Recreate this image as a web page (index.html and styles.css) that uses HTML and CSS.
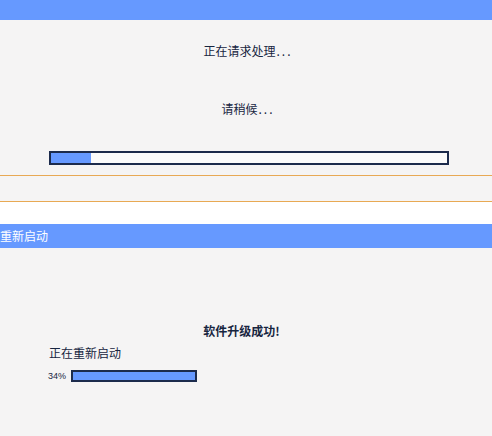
FILE: index.html
```html
<!DOCTYPE html>
<html lang="zh-CN">
<head>
<meta charset="utf-8">
<title>重新启动</title>
<link rel="stylesheet" href="styles.css">
</head>
<body>
  <div class="topbar"></div>
  <section class="request">
    <p class="msg msg-first">正在请求处理<span class="dots">...</span></p>
    <p class="msg msg-wait">请稍候<span class="dots">...</span></p>
    <div class="progress progress-wide">
      <div class="progress-fill" style="width: 10%"></div>
    </div>
  </section>
  <div class="divider"></div>
  <div class="gap"></div>
  <div class="titlebar">重新启动</div>
  <section class="reboot">
    <p class="msg msg-success">软件升级成功!</p>
    <p class="status">正在重新启动</p>
    <div class="percent-row">
      <span class="percent">34%</span>
      <div class="progress progress-small">
        <div class="progress-fill" style="width: 100%"></div>
      </div>
    </div>
  </section>
</body>
</html>
```

FILE: styles.css
```css
html, body {
  margin: 0;
  padding: 0;
}

body {
  width: 492px;
  height: 436px;
  background: #f5f4f4;
  color: #17253f;
  font-family: "Noto Sans CJK SC", "DejaVu Sans", sans-serif;
  font-size: 12px;
  overflow: hidden;
}

p {
  margin: 0;
}

.topbar {
  height: 20px;
  background: #6699ff;
}

.request {
  display: flex;
  flex-direction: column;
  padding-bottom: 10px;
}

.msg {
  line-height: 20px;
  text-align: center;
}

.dots {
  letter-spacing: 2px;
  margin-left: 1px;
}

.msg-first {
  margin-top: 21px;
  padding-left: 4px;
}

.msg-wait {
  margin-top: 38px;
  padding-left: 4px;
}

.progress {
  box-sizing: border-box;
  border: 2px solid #1c2b4c;
  background: #fbfbfb;
}

.progress-wide {
  margin: 32px 0 0 49px;
  width: 400px;
  height: 14px;
}

.progress-fill {
  height: 100%;
  background: #6699ff;
}

.divider {
  height: 25px;
  border-top: 1px solid #e8a954;
  border-bottom: 1px solid #e8a954;
}

.gap {
  height: 22px;
  background: #ffffff;
}

.titlebar {
  height: 24px;
  line-height: 24px;
  background: #6699ff;
  color: #ffffff;
  font-size: 12px;
}

.reboot {
  display: flex;
  flex-direction: column;
}

.msg-success {
  margin-top: 73px;
  padding-right: 9px;
  font-weight: 600;
}

.status {
  margin: 2px 0 0 49px;
  line-height: 20px;
}

.percent-row {
  display: flex;
  align-items: center;
  margin: 7px 0 0 48px;
  gap: 5px;
}

.percent {
  font-family: "Liberation Sans", Arial, sans-serif;
  font-size: 9px;
  line-height: 11px;
  width: 18px;
}

.progress-small {
  width: 126px;
  height: 12px;
}
```
